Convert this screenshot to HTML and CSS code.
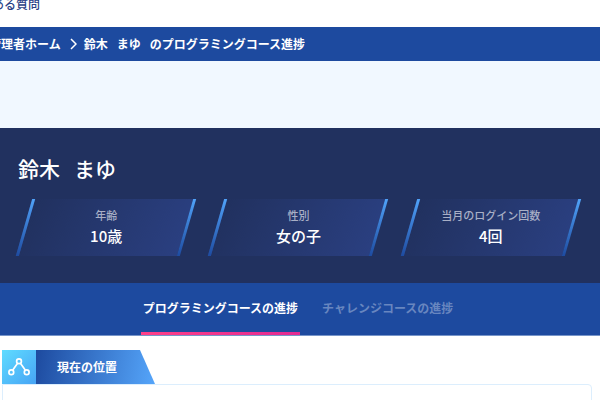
FILE: index.html
```html
<!DOCTYPE html>
<html lang="ja">
<head>
    <meta charset="UTF-8">
    <meta name="viewport" content="width=device-width, initial-scale=1.0">
    <title>プログラミングコース進捗</title>
    <link rel="stylesheet" href="styles.css">
</head>
<body>
    <header class="site-header">
        <a href="#">よくある質問</a>
    </header>

    <nav class="breadcrumb">
        <a href="#">管理者ホーム</a>
        <svg class="chevron" width="7" height="12" viewBox="0 0 7 12">
            <path d="M1 1L6 6L1 11" fill="none" stroke="#ffffff" stroke-width="1.5"/>
        </svg>
        <span class="crumb-name"><span>鈴木</span><span>まゆ</span></span>
        <span>のプログラミングコース進捗</span>
    </nav>

    <div class="content">
        <!-- Student profile -->
        <section class="profile">
            <h1 class="profile-name"><span>鈴木</span><span>まゆ</span></h1>
            <dl class="stats">
                <div class="stat">
                    <dt>年齢</dt>
                    <dd>10歳</dd>
                </div>
                <div class="stat">
                    <dt>性別</dt>
                    <dd>女の子</dd>
                </div>
                <div class="stat">
                    <dt>当月のログイン回数</dt>
                    <dd>4回</dd>
                </div>
            </dl>
        </section>

        <nav class="tabs">
            <a href="#" class="tab active">プログラミングコースの進捗</a>
            <a href="#" class="tab">チャレンジコースの進捗</a>
        </nav>

        <!-- Current position -->
        <main class="position">
            <div class="position-head">
                <div class="position-icon">
                    <svg width="22" height="18" viewBox="0 0 22 18" fill="none" stroke="#ffffff" stroke-width="1.7">
                        <path d="M9.6 5.2L4.6 12.2M12.4 5.2L17.4 12.2"/>
                        <circle cx="11" cy="3.3" r="2.4"/>
                        <circle cx="3.3" cy="14.3" r="2.4"/>
                        <circle cx="18.7" cy="14.3" r="2.4"/>
                    </svg>
                </div>
                <h2 class="position-title">現在の位置</h2>
            </div>
            <div class="position-panel"></div>
        </main>
    </div>
</body>
</html>
```

FILE: styles.css
```css
body {
    margin: 0;
    background-color: #ffffff;
    color: #ffffff;
    font-family: "Noto Sans CJK JP", sans-serif;
    font-size: 12px;
    font-weight: 500;
    line-height: 18px;
    overflow: hidden;
}

a {
    color: inherit;
    text-decoration: none;
}

/* Header and breadcrumb */
.site-header {
    display: flex;
    align-items: flex-start;
    height: 27px;
    margin-left: -32px;
    color: #2b4286;
}

.site-header a {
    margin-top: -5px;
}

.breadcrumb {
    display: flex;
    align-items: center;
    height: 34px;
    background-color: #1d4a9f;
    font-weight: 700;
    white-space: nowrap;
}

.breadcrumb a {
    margin-left: -11px;
}

.chevron {
    margin: 0 7px 0 9px;
}

.crumb-name {
    display: flex;
    gap: 9px;
    margin-right: 9px;
}

.content {
    padding-top: 67px;
    background-color: #f1f8ff;
}

/* Profile */
.profile {
    padding: 24px 27px 27px 24px;
    background-color: #21315f;
}

.profile-name {
    display: flex;
    gap: 14px;
    margin: 0 0 15px -6px;
    font-size: 21px;
    font-weight: 500;
    line-height: 32px;
}

.stats {
    display: grid;
    grid-template-columns: repeat(3, 1fr);
    gap: 28px;
    margin: 0;
}

.stat {
    position: relative;
    padding: 8px 0;
    text-align: center;
}

/* Slanted card behind the text */
.stat::before {
    content: "";
    position: absolute;
    inset: 0;
    border: solid;
    border-width: 0 3px;
    border-image: linear-gradient(#51a4fa, #1d4a9f) 1;
    background: linear-gradient(100deg, #21315f, #2a3f80);
    transform: skewX(-16deg);
}

.stat dt,
.stat dd {
    position: relative;
    margin: 0;
}

.stat dt {
    color: #a8afc6;
    font-size: 11px;
    line-height: 16px;
}

.stat dd {
    font-size: 15px;
    line-height: 25px;
}

/* Tabs */
.tabs {
    display: flex;
    justify-content: center;
    gap: 20px;
    padding-right: 4px;
    background-color: #1d4a9f;
    border-bottom: 1px solid #7795c9;
}

.tab {
    padding: 16px 2px 15px;
    border-bottom: 3px solid transparent;
    color: #6886bf;
    font-weight: 700;
}

.tab.active {
    color: #ffffff;
    border-image: linear-gradient(90deg, #ff4088, #e22a92) 1;
}

/* Current position */
.position {
    padding: 14px 8px 0 2px;
    background-color: #ffffff;
}

.position-head {
    display: flex;
}

.position-icon {
    display: flex;
    align-items: center;
    justify-content: center;
    width: 34px;
    height: 34px;
    background: linear-gradient(135deg, #5fdcff, #47a4f5);
}

.position-title {
    box-sizing: border-box;
    width: 119px;
    margin: 0;
    padding-left: 21px;
    background: linear-gradient(100deg, #1d4a9f, #55a5fa);
    clip-path: polygon(0 0, 104px 0, 100% 100%, 0 100%);
    font-size: 12px;
    font-weight: 700;
    line-height: 34px;
}

.position-panel {
    height: 160px;
    border: 1px solid #dceefd;
    border-radius: 0 4px 4px 4px;
}
```
